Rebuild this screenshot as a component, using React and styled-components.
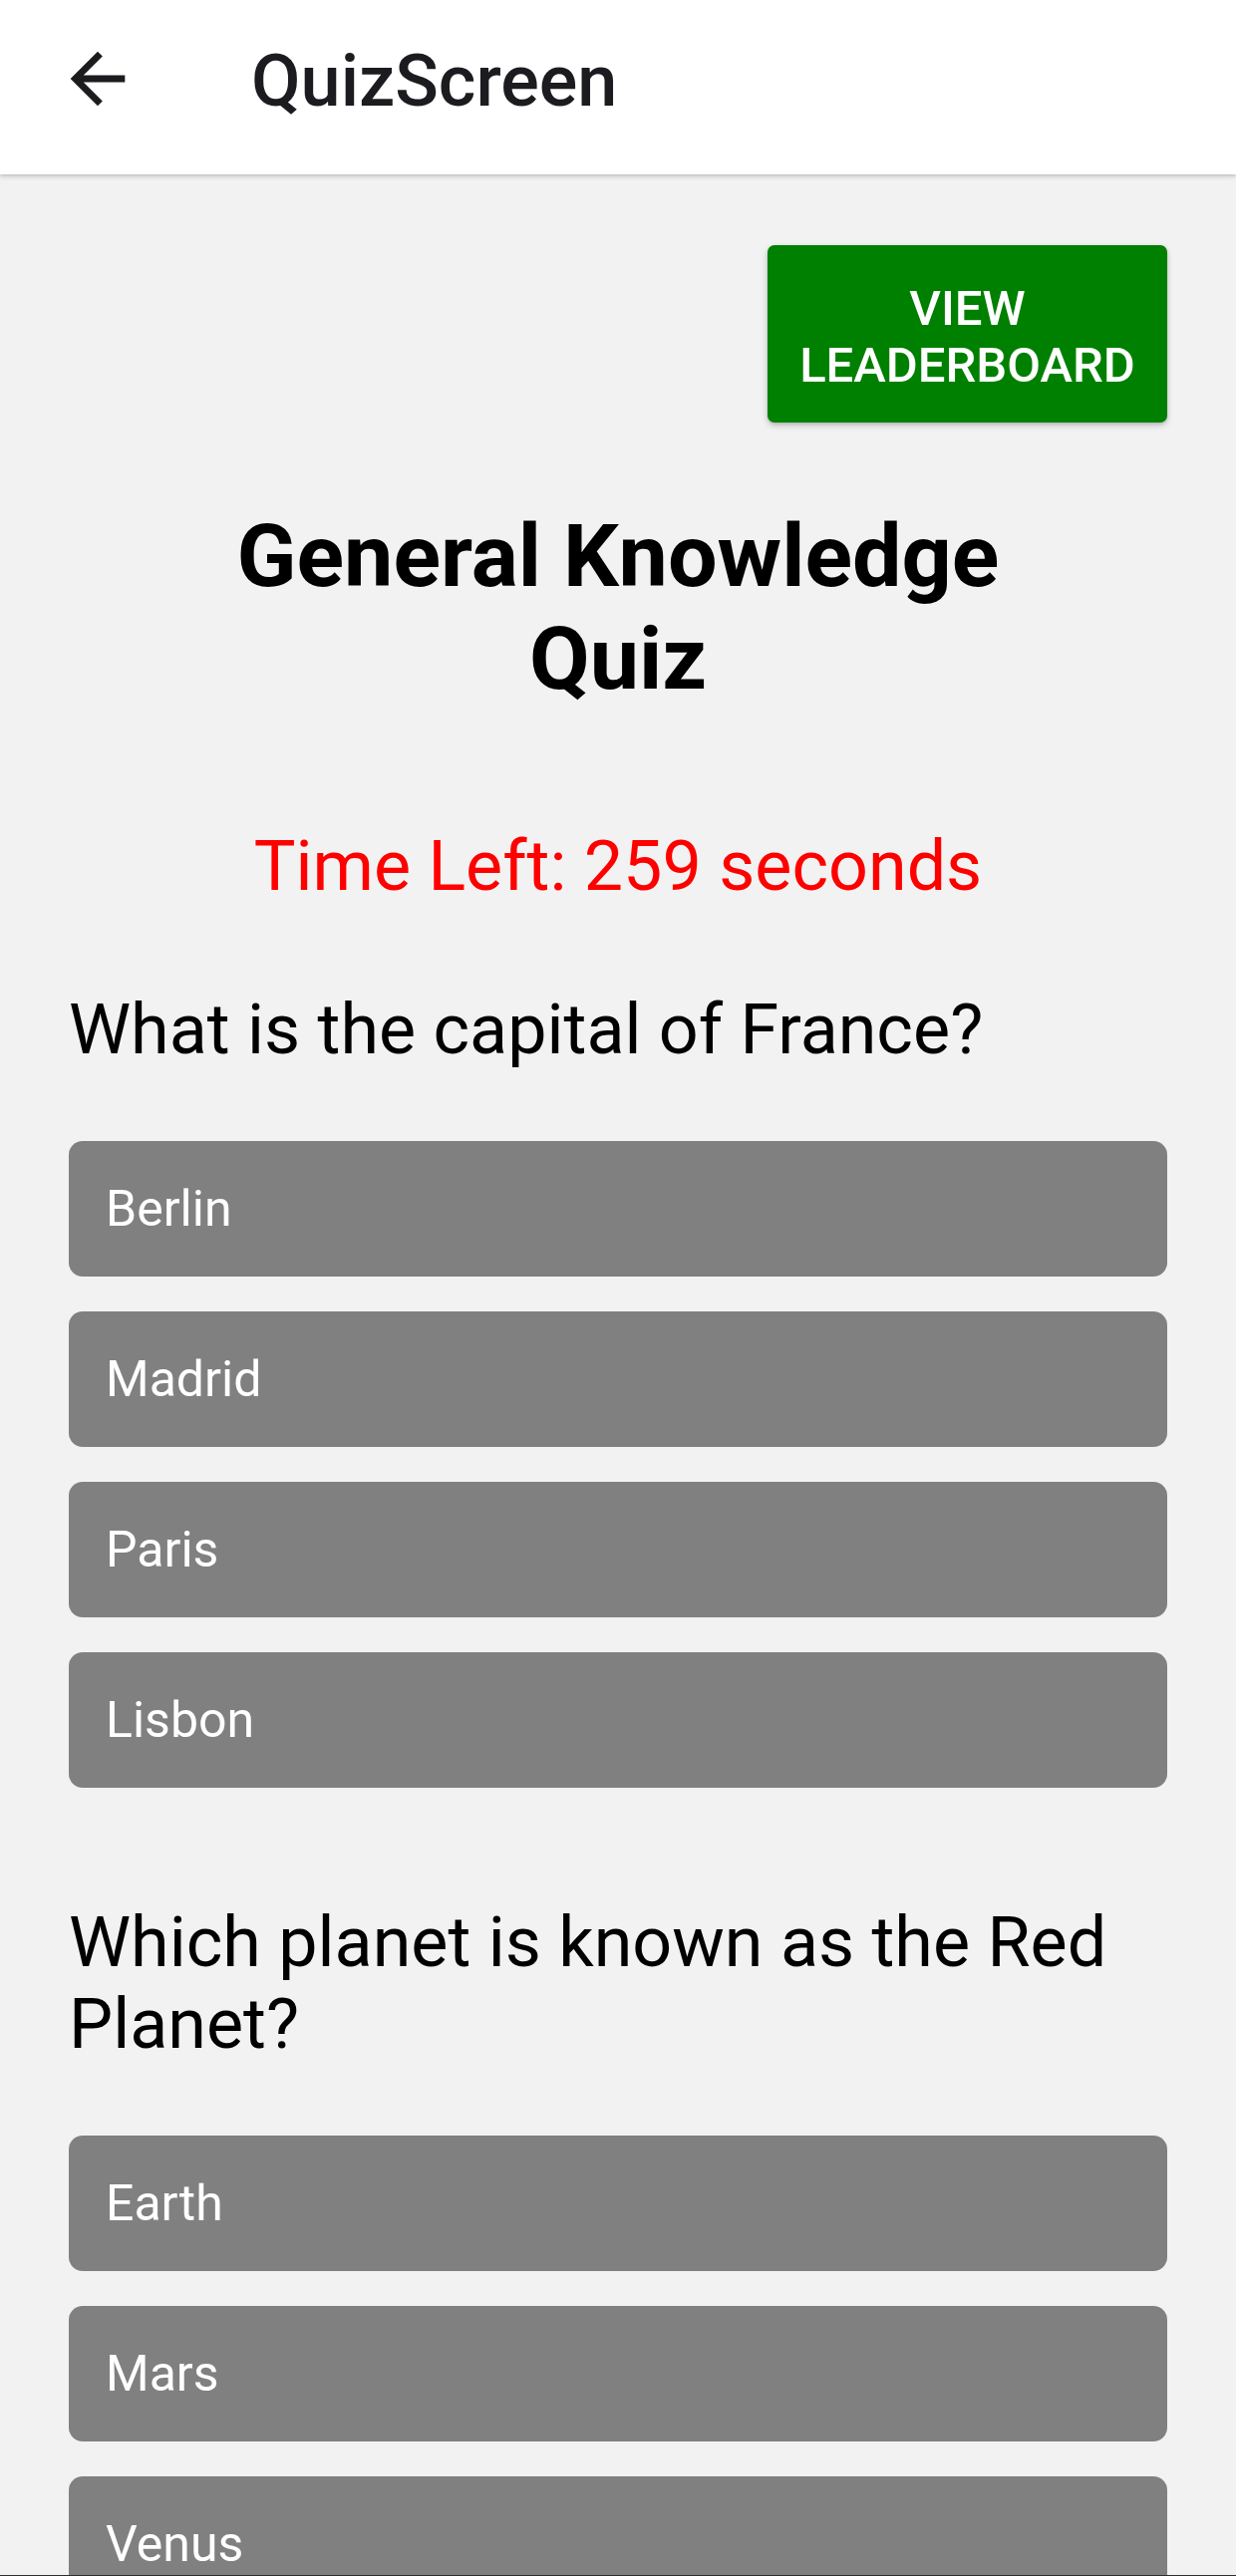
import React from "react";
import styled, { createGlobalStyle } from "styled-components";

const GlobalStyle = createGlobalStyle`
  html, body {
    margin: 0;
    padding: 0;
    background: #f2f2f2;
  }
  * { box-sizing: border-box; }
  body {
    font-family: Roboto, "Noto Sans", "Liberation Sans", sans-serif;
  }
`;

const Screen = styled.div`
  height: 2585px;
  display: flex;
  flex-direction: column;
  overflow: hidden;
  background: #f2f2f2;
  border-bottom: 1px solid #2e2e2e;
`;

const Header = styled.header`
  flex: 0 0 175px;
  height: 175px;
  display: flex;
  align-items: center;
  padding: 0 0 17px 57px;
  background: #ffffff;
  box-shadow: 0 2px 5px rgba(0, 0, 0, 0.18), 0 1px 2px rgba(0, 0, 0, 0.08);
  position: relative;
  z-index: 1;
`;

const BackButton = styled.button`
  width: 82px;
  height: 82px;
  padding: 0;
  border: none;
  background: transparent;
  display: flex;
  align-items: center;
  justify-content: center;
  color: #1c1b1f;
`;

const HeaderTitle = styled.h1`
  margin: 5px 0 0 113px;
  font-family: Roboto, "Liberation Sans", sans-serif;
  font-weight: 500;
  font-size: 72px;
  line-height: 84px;
  color: #1c1b1f;
`;

const Content = styled.main`
  flex: 1;
  display: flex;
  flex-direction: column;
  padding: 0 69px;
`;

const LeaderboardButton = styled.button`
  align-self: flex-end;
  margin-top: 71px;
  width: 401px;
  height: 178px;
  padding: 5px 20px 0;
  border: none;
  border-radius: 7px;
  background: #008000;
  color: #ffffff;
  font-family: Roboto, "Liberation Sans", sans-serif;
  font-weight: 500;
  font-size: 49px;
  line-height: 57px;
  text-transform: uppercase;
  text-align: center;
  box-shadow: 0 3px 6px rgba(0, 0, 0, 0.2), 0 1px 3px rgba(0, 0, 0, 0.12);
`;

const QuizTitle = styled.h2`
  margin: 82px auto 0;
  max-width: 860px;
  font-family: Roboto, "Liberation Sans", sans-serif;
  font-weight: 700;
  font-size: 88px;
  line-height: 103px;
  text-align: center;
  color: #000000;
`;

const Timer = styled.p`
  margin: 117px 0 0;
  font-family: Roboto, "Liberation Sans", sans-serif;
  font-size: 70px;
  line-height: 80px;
  text-align: center;
  color: #ff0000;
`;

const QuestionBlock = styled.section`
  display: flex;
  flex-direction: column;
  gap: 35px;
  margin-top: ${(p) => p.$top}px;
`;

const QuestionText = styled.h3`
  margin: 0 0 36px;
  font-family: Roboto, "Liberation Sans", sans-serif;
  font-weight: 400;
  font-size: 70px;
  line-height: 82px;
  color: #000000;
`;

const Option = styled.button`
  flex: 0 0 136px;
  height: 136px;
  display: flex;
  align-items: center;
  padding: 0 37px;
  border: none;
  border-radius: 14px;
  background: #808080;
  color: #ffffff;
  font-family: Roboto, "Liberation Sans", sans-serif;
  font-size: 50px;
  text-align: left;
`;

const ArrowBack = () => (
  <svg width="82" height="82" viewBox="0 0 24 24" fill="currentColor">
    <path d="M20 11H7.83l5.59-5.59L12 4l-8 8 8 8 1.41-1.41L7.83 13H20v-2z" />
  </svg>
);

const questions = [
  {
    q: "What is the capital of France?",
    options: ["Berlin", "Madrid", "Paris", "Lisbon"],
    top: 83,
  },
  {
    q: "Which planet is known as the Red Planet?",
    options: ["Earth", "Mars", "Venus", "Jupiter"],
    top: 114,
  },
];

export default function App() {
  return (
    <>
      <GlobalStyle />
      <Screen>
        <Header>
          <BackButton aria-label="Back">
            <ArrowBack />
          </BackButton>
          <HeaderTitle>QuizScreen</HeaderTitle>
        </Header>
        <Content>
          <LeaderboardButton>View Leaderboard</LeaderboardButton>
          <QuizTitle>General Knowledge Quiz</QuizTitle>
          <Timer>Time Left: 259 seconds</Timer>
          {questions.map((item) => (
            <QuestionBlock key={item.q} $top={item.top}>
              <QuestionText>{item.q}</QuestionText>
              {item.options.map((o) => (
                <Option key={o}>{o}</Option>
              ))}
            </QuestionBlock>
          ))}
        </Content>
      </Screen>
    </>
  );
}
